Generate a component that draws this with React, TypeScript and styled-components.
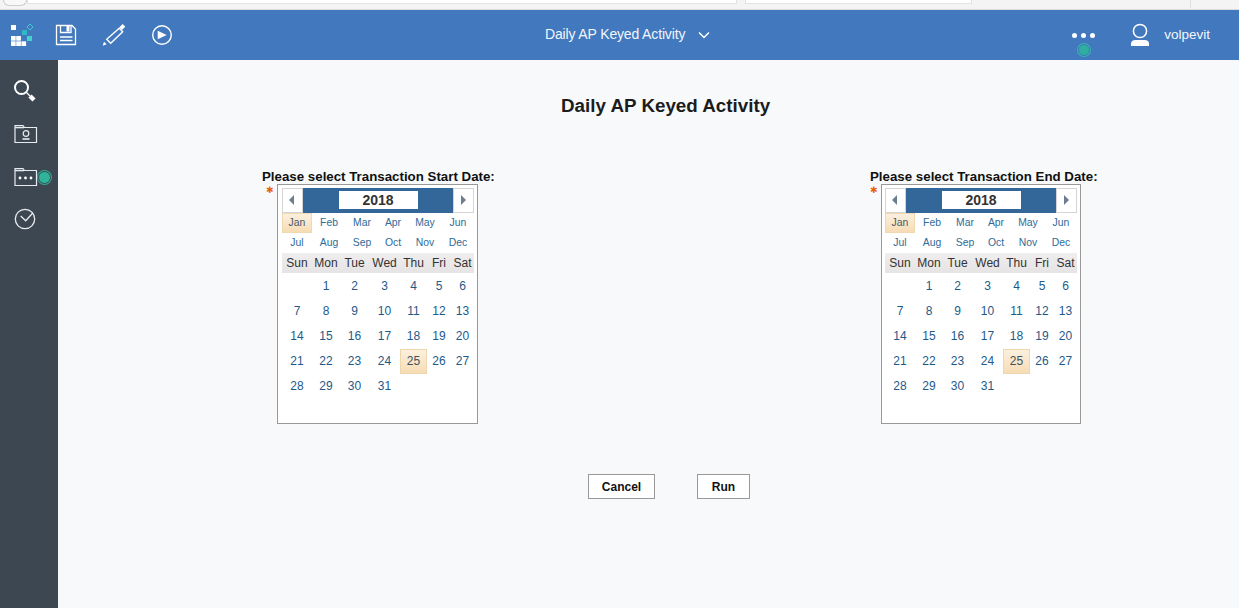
import React from "react";
import styled, { createGlobalStyle } from "styled-components";

const Global = createGlobalStyle`
  html, body { margin: 0; padding: 0; height: 100%; overflow: hidden; }
  body { font-family: "Liberation Sans", Arial, sans-serif; background: #f7f9fb; }
  * { box-sizing: border-box; }
`;

const Page = styled.div`
  width: 1239px;
  height: 608px;
  display: flex;
  flex-direction: column;
`;

const BrowserStrip = styled.div`
  height: 10px;
  flex: none;
  background: #f4f4f4;
  border-bottom: 1px solid #dcdcdc;
  display: flex;
  align-items: flex-start;
`;

const StripCircle = styled.div`
  width: 24px;
  height: 6px;
  margin-left: 3px;
  background: #f8f8f8;
  border: 1px solid #cfcfcf;
  border-top: none;
  border-radius: 0 0 12px 12px;
  flex: none;
`;

const StripField = styled.div<{ $w: number; $ml: number }>`
  width: ${(p) => p.$w}px;
  margin-left: ${(p) => p.$ml}px;
  height: 4px;
  background: #fff;
  border: 1px solid #e2e2e2;
  border-top: none;
  flex: none;
`;

const StripDivider = styled.div`
  width: 1px;
  height: 8px;
  margin-left: 218px;
  background: #dedede;
  flex: none;
`;

const Header = styled.header`
  height: 50px;
  flex: none;
  background: #4178be;
  color: #fff;
  display: flex;
  align-items: center;
  position: relative;
`;

const HeaderLeft = styled.div`
  display: flex;
  align-items: center;
  padding-left: 10px;
  width: 545px;
  flex: none;
`;

const IconSlot = styled.div<{ $w: number; $gap: number }>`
  width: ${(p) => p.$w}px;
  margin-right: ${(p) => p.$gap}px;
  display: flex;
  align-items: center;
  justify-content: center;
  flex: none;
`;

const HeaderTitle = styled.div`
  font-size: 14px;
  letter-spacing: -0.15px;
  color: #f2f6fb;
  width: 142px;
  padding-bottom: 2px;
  white-space: nowrap;
  font-family: "Liberation Sans", Arial, sans-serif;
`;

const Chevron = styled.div`
  margin-left: 10px;
  display: flex;
  width: 14px;
`;

const HeaderRight = styled.div`
  margin-left: auto;
  display: flex;
  align-items: center;
  padding-right: 29px;
`;

const Dots = styled.div`
  display: flex;
  gap: 4px;
  width: 24px;
  margin-right: 34px;
  position: relative;
`;

const Dot = styled.span`
  width: 5px;
  height: 5px;
  border-radius: 50%;
  background: #fff;
`;

const StatusDot = styled.span`
  width: 13px;
  height: 13px;
  margin-top: 4px;
  border-radius: 50%;
  background: #2fb39a;
  border: 1.5px solid #3d4752;
  box-shadow: 0 0 0 1px #35a78f;
  flex: none;
`;

const HeaderStatus = styled(StatusDot)`
  position: absolute;
  left: 6px;
  top: 11px;
  width: 12px;
  height: 12px;
  margin-top: 0;
  background: #30ae9f;
  border-color: #4178be;
  box-shadow: 0 0 0 1px #36b3ad;
`;

const UserName = styled.span`
  margin-left: 14px;
  padding-bottom: 2px;
  font-size: 13.5px;
  color: #f4f7fb;
`;

const Body = styled.div`
  flex: 1;
  display: flex;
  min-height: 0;
`;

const Sidebar = styled.nav`
  width: 58px;
  flex: none;
  background: #3d4752;
  display: flex;
  flex-direction: column;
  padding: 18px 0 0 14px;
`;

const SideItem = styled.div<{ $h: number }>`
  height: ${(p) => p.$h}px;
  display: flex;
  align-items: flex-start;
`;

const Main = styled.main`
  flex: 1;
  background: #f7f9fb;
  display: flex;
  flex-direction: column;
`;

const Title = styled.h1`
  margin: 35px 0 0;
  padding-left: 503px;
  font-size: 18.8px;
  line-height: 21px;
  font-weight: 700;
  color: #1c1c1c;
  white-space: nowrap;
`;

const Pickers = styled.div`
  margin-top: 53px;
  display: flex;
  padding-left: 204px;
`;

const Picker = styled.section<{ $w: number }>`
  width: ${(p) => p.$w}px;
  flex: none;
`;

const PickerLabel = styled.div`
  font-size: 13.3px;
  line-height: 15px;
  font-weight: 700;
  color: #111;
  white-space: nowrap;
`;

const CalendarRow = styled.div`
  display: flex;
  align-items: flex-start;
`;

const Required = styled.span<{ $w: number }>`
  width: ${(p) => p.$w}px;
  flex: none;
  color: #e8630a;
  font-size: 9px;
  line-height: 10px;
  text-align: right;
  padding-right: 3px;
  padding-top: 1px;
`;

const Calendar = styled.div<{ $w: number; $pl: number }>`
  width: ${(p) => p.$w}px;
  height: 240px;
  background: #fff;
  border: 1px solid #999;
  padding: 3px 0 0 ${(p) => p.$pl}px;
  flex: none;
`;

const YearBar = styled.div`
  display: grid;
  grid-template-columns: 21px 150px 21px;
  height: 25px;
`;

const ArrowBtn = styled.div`
  background: #fff;
  border: 1px solid #d5d5d5;
  display: flex;
  align-items: center;
  justify-content: center;
  padding-bottom: 2px;
`;

const Arrow = styled.span<{ $dir: "l" | "r" }>`
  width: 0;
  height: 0;
  border-top: 5px solid transparent;
  border-bottom: 5px solid transparent;
  ${(p) =>
    p.$dir === "l"
      ? "border-right: 5px solid #6d7d91; margin-right: 2px;"
      : "border-left: 5px solid #6d7d91;"}
`;

const YearTrack = styled.div`
  background: #336699;
  display: flex;
  align-items: center;
  justify-content: center;
  padding-bottom: 1px;
`;

const YearValue = styled.div`
  width: 79px;
  height: 18px;
  background: #fff;
  color: #333;
  font-size: 14px;
  line-height: 19px;
  font-weight: 700;
  text-align: center;
`;

const Months = styled.div`
  display: grid;
  grid-template-columns: 30px 34px 32px 30px 34px 32px;
  grid-auto-rows: 20px;
`;

const Month = styled.div<{ $active?: boolean }>`
  font-size: 10.4px;
  line-height: 20px;
  text-align: center;
  color: #2f6b98;
  ${(p) =>
    p.$active &&
    `color:#4a5a68;background:linear-gradient(#fbf0df,#f6dcb4);border:1px solid #f0d9b0;line-height:18px;`}
`;

const WeekRow = styled.div`
  display: grid;
  grid-template-columns: 30px 28px 29px 31px 27px 24px 23px;
  width: 192px;
  height: 20px;
  background: linear-gradient(#efeded, #e5e3e3);
`;

const WeekDay = styled.div`
  font-size: 12px;
  line-height: 20px;
  text-align: center;
  color: #333;
  white-space: nowrap;
`;

const Days = styled.div`
  margin-top: 1px;
  display: grid;
  grid-template-columns: 30px 28px 29px 31px 27px 24px 23px;
  grid-auto-rows: 25px;
`;

const Day = styled.div<{ $today?: boolean }>`
  font-size: 12px;
  line-height: 25px;
  text-align: center;
  color: #1d5a8a;
  ${(p) =>
    p.$today &&
    `color:#40505c;background:linear-gradient(#fbf0df,#f6dcb4);border:1px solid #eed6ad;line-height:23px;`}
`;

const Actions = styled.div`
  margin-top: 50px;
  padding-left: 530px;
  display: flex;
  gap: 42px;
`;

const ActionButton = styled.button<{ $w: number }>`
  width: ${(p) => p.$w}px;
  height: 25px;
  background: #fff;
  border: 1px solid #999;
  font-family: "Liberation Sans", Arial, sans-serif;
  font-size: 12px;
  font-weight: 700;
  color: #111;
  padding: 0;
`;

const MONTHS = ["Jan", "Feb", "Mar", "Apr", "May", "Jun", "Jul", "Aug", "Sep", "Oct", "Nov", "Dec"];
const WEEK = ["Sun", "Mon", "Tue", "Wed", "Thu", "Fri", "Sat"];
const DAYS: (number | null)[] = [null, ...Array.from({ length: 31 }, (_, i) => i + 1)];

const CalendarWidget = ({ width, inset }: { width: number; inset: number }) => (
  <Calendar $w={width} $pl={inset}>
    <YearBar>
      <ArrowBtn><Arrow $dir="l" /></ArrowBtn>
      <YearTrack><YearValue>2018</YearValue></YearTrack>
      <ArrowBtn><Arrow $dir="r" /></ArrowBtn>
    </YearBar>
    <Months>
      {MONTHS.map((m) => (
        <Month key={m} $active={m === "Jan"}>{m}</Month>
      ))}
    </Months>
    <WeekRow>
      {WEEK.map((d) => <WeekDay key={d}>{d}</WeekDay>)}
    </WeekRow>
    <Days>
      {DAYS.map((d, i) => (
        <Day key={i} $today={d === 25}>{d}</Day>
      ))}
    </Days>
  </Calendar>
);

const LogoIcon = () => (
  <svg width="24" height="24" viewBox="0 0 24 24">
    <rect x="1" y="2" width="5" height="5" fill="#fff" />
    <rect x="1" y="13" width="4.7" height="4.7" fill="#fff" />
    <rect x="6.2" y="13" width="4.7" height="4.7" fill="#fff" />
    <rect x="1" y="18.3" width="4.7" height="4.7" fill="#fff" />
    <rect x="6.2" y="18.3" width="4.7" height="4.7" fill="#fff" />
    <rect x="11.4" y="18.3" width="4.7" height="4.7" fill="#fff" />
    <rect x="12" y="7" width="5" height="5" fill="#2fb9c4" />
    <rect x="17" y="13" width="5" height="5" fill="#44d4cc" />
    <path d="M20 1 L23 4 L20 7 L17 4 Z" fill="none" stroke="#45c9d0" strokeWidth="1" />
  </svg>
);

const SaveIcon = () => (
  <svg width="22" height="22" viewBox="0 0 22 22" fill="none" stroke="#fff" strokeWidth="1.3">
    <path d="M1.5 1.5H17L20.5 5V20.5H1.5Z" />
    <path d="M5.5 1.5V8.5H16V1.5" />
    <rect x="11.5" y="2" width="3" height="5.5" fill="#fff" stroke="none" />
    <path d="M5 13H17.5M5 16.5H17.5" />
  </svg>
);

const PenIcon = () => (
  <svg width="24" height="24" viewBox="0 0 24 24" fill="none" stroke="#fff" strokeWidth="1.4">
    <path d="M4.7 16.3L17.3 5.3L20.7 8.7L8.7 20.3Z" />
    <path d="M17.3 4.3L20.7 1L23.3 3.7L20 7Z" fill="#fff" stroke="none" />
    <path d="M0.7 22.7L2 18.7L4.7 21.3Z" fill="#fff" stroke="none" />
  </svg>
);

const PlayIcon = () => (
  <svg width="22" height="22" viewBox="0 0 22 22" fill="none" stroke="#fff" strokeWidth="1.4">
    <circle cx="11" cy="11" r="9.3" />
    <path d="M6.7 6.7L15.7 11L6.7 15.3Z" fill="#fff" stroke="none" />
  </svg>
);

const ChevronIcon = () => (
  <svg width="14" height="14" viewBox="0 0 14 14" fill="none" stroke="#fff" strokeWidth="1.5">
    <path d="M2 4.5L7 9.5L12 4.5" />
  </svg>
);

const UserIcon = () => (
  <svg width="20" height="24" viewBox="0 0 20 24" fill="none">
    <circle cx="10" cy="8" r="6.6" stroke="#fff" strokeWidth="1.5" />
    <path d="M1 23V20.5C1 18.5 3 17 5 17H15C17 17 19 18.5 19 20.5V23Z" fill="#fff" />
  </svg>
);

const SearchIcon = () => (
  <svg width="24" height="26" viewBox="0 0 24 26" fill="none" stroke="#fff">
    <circle cx="7.5" cy="9.5" r="6.5" strokeWidth="2" />
    <path d="M12.5 14.5L16 18" strokeWidth="1.2" />
    <path d="M16 18L20 22" strokeWidth="4.5" />
  </svg>
);

const FolderUserIcon = () => (
  <svg width="24" height="20" viewBox="0 0 24 20" fill="none" stroke="#e8ebee" strokeWidth="1.2">
    <path d="M1 18.5V1.5H9L10.5 3.5H22.5V18.5Z" />
    <path d="M1 3.5H10" strokeWidth="1.6" />
    <circle cx="12" cy="9.5" r="2.8" />
    <path d="M8.5 15H15.5" strokeWidth="1.6" />
  </svg>
);

const FolderDotsIcon = () => (
  <svg width="24" height="20" viewBox="0 0 24 20" fill="none" stroke="#e8ebee" strokeWidth="1.2">
    <path d="M1 18.5V1.5H9L10.5 3.5H22.5V18.5Z" />
    <path d="M1 3.5H10" strokeWidth="1.6" />
    <circle cx="6" cy="11" r="1.4" fill="#fff" stroke="none" />
    <circle cx="11.5" cy="11" r="1.4" fill="#fff" stroke="none" />
    <circle cx="17" cy="11" r="1.4" fill="#fff" stroke="none" />
  </svg>
);

const ClockIcon = () => (
  <svg width="22" height="22" viewBox="0 0 22 22" fill="none" stroke="#e8ebee" strokeWidth="1.3">
    <circle cx="11" cy="11" r="9.7" />
    <path d="M6.7 8L11.7 12.7L19 4.7" />
  </svg>
);

export default function App() {
  return (
    <Page>
      <Global />
      <BrowserStrip>
        <StripCircle />
        <StripField $w={710} $ml={0} />
        <StripField $w={227} $ml={8} />
        <StripDivider />
      </BrowserStrip>
      <Header>
        <HeaderLeft>
          <IconSlot $w={24} $gap={21}><LogoIcon /></IconSlot>
          <IconSlot $w={22} $gap={25}><SaveIcon /></IconSlot>
          <IconSlot $w={24} $gap={25}><PenIcon /></IconSlot>
          <IconSlot $w={22} $gap={0}><PlayIcon /></IconSlot>
        </HeaderLeft>
        <HeaderTitle>Daily AP Keyed Activity</HeaderTitle>
        <Chevron><ChevronIcon /></Chevron>
        <HeaderRight>
          <Dots>
            <Dot /><Dot /><Dot />
            <HeaderStatus />
          </Dots>
          <UserIcon />
          <UserName>volpevit</UserName>
        </HeaderRight>
      </Header>
      <Body>
        <Sidebar>
          <SideItem $h={46}><SearchIcon /></SideItem>
          <SideItem $h={43}><FolderUserIcon /></SideItem>
          <SideItem $h={41}><FolderDotsIcon /><StatusDot /></SideItem>
          <SideItem $h={30}><ClockIcon /></SideItem>
        </Sidebar>
        <Main>
          <Title>Daily AP Keyed Activity</Title>
          <Pickers>
            <Picker $w={608}>
              <PickerLabel>Please select Transaction Start Date:</PickerLabel>
              <CalendarRow>
                <Required $w={15}>✱</Required>
                <CalendarWidget width={201} inset={4} />
              </CalendarRow>
            </Picker>
            <Picker $w={240}>
              <PickerLabel>Please select Transaction End Date:</PickerLabel>
              <CalendarRow>
                <Required $w={11}>✱</Required>
                <CalendarWidget width={200} inset={3} />
              </CalendarRow>
            </Picker>
          </Pickers>
          <Actions>
            <ActionButton $w={67}>Cancel</ActionButton>
            <ActionButton $w={53}>Run</ActionButton>
          </Actions>
        </Main>
      </Body>
    </Page>
  );
}
